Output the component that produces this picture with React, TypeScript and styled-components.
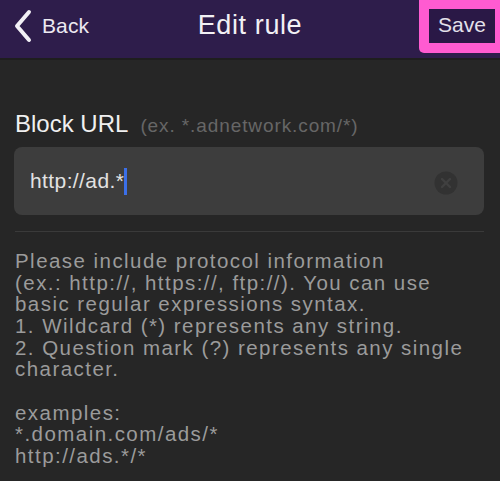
import React from "react";
import styled, { createGlobalStyle } from "styled-components";

const GlobalStyle = createGlobalStyle`
  html, body {
    margin: 0;
    padding: 0;
    background: #262626;
  }
  body {
    font-family: "Liberation Sans", Arial, sans-serif;
  }
`;

const Screen = styled.div`
  width: 500px;
  height: 481px;
  background: #262626;
  overflow: hidden;
`;

const NavBar = styled.header`
  position: relative;
  display: flex;
  align-items: stretch;
  justify-content: space-between;
  height: 58px;
  background: #2e1d4b;
  border-bottom: 2px solid #1e1e1e;
`;

const BackButton = styled.button`
  display: flex;
  align-items: center;
  gap: 9px;
  padding: 0 0 6px 13px;
  border: none;
  background: none;
  color: #ece9f1;
  font-family: "Liberation Sans", Arial, sans-serif;
  font-size: 21px;
  letter-spacing: 0.1px;
  cursor: pointer;
`;

const Title = styled.h1`
  position: absolute;
  left: 0;
  right: 0;
  top: 0;
  margin: 0;
  line-height: 50px;
  text-align: center;
  font-weight: normal;
  font-size: 27px;
  letter-spacing: 0.6px;
  color: #f2f0f5;
  pointer-events: none;
`;

const SaveHighlight = styled.div`
  display: flex;
  align-items: flex-start;
  height: 53px;
  padding: 9px 5px 0 10px;
  box-sizing: border-box;
  background: #ff5bd1;
  border-bottom-left-radius: 5px;
`;

const SaveButton = styled.button`
  width: 66px;
  height: 34px;
  border: none;
  background: #2a1846;
  color: #e4e0ea;
  font-family: "Liberation Sans", Arial, sans-serif;
  font-size: 21px;
  padding: 0 0 2px;
  text-align: center;
`;

const Content = styled.main`
  padding: 50px 15px 0;
`;

const LabelRow = styled.div`
  display: flex;
  align-items: baseline;
  gap: 12px;
`;

const Label = styled.span`
  font-size: 24px;
  color: #f0f0f0;
`;

const Hint = styled.span`
  font-size: 19px;
  letter-spacing: 0.9px;
  color: #666666;
`;

const InputBox = styled.div`
  display: flex;
  align-items: center;
  justify-content: space-between;
  height: 68px;
  margin: 9px 1px 0 -1px;
  padding: 0 26px 0 16px;
  border-radius: 8px;
  background: #3d3d3d;
`;

const InputText = styled.span`
  display: flex;
  align-items: center;
  font-size: 21px;
  letter-spacing: 0.4px;
  color: #e2e2e2;
`;

const Caret = styled.span`
  display: inline-block;
  width: 3px;
  height: 27px;
  background: #3b6fe8;
`;

const ClearIcon = styled.svg`
  width: 24px;
  height: 24px;
  margin-top: 3px;
`;

const Divider = styled.hr`
  margin: 16px 1px 0 0;
  border: none;
  border-top: 1px solid #3a3a3a;
`;

const HelpText = styled.p`
  margin: 18px 0 0;
  font-size: 20.5px;
  line-height: 21.67px;
  letter-spacing: 1.45px;
  color: #9b9b9b;
  white-space: pre-line;
`;

const help = `Please include protocol information
(ex.: http://, https://, ftp://). You can use
basic regular expressions syntax.
1. Wildcard (*) represents any string.
2. Question mark (?) represents any single
character.

examples:
*.domain.com/ads/*
http://ads.*/*`;

const App = () => {
  return (
    <Screen>
      <GlobalStyle />
      <NavBar>
        <BackButton>
          <svg width="20" height="34" viewBox="0 0 20 34">
            <path
              d="M16 3 L4 17 L16 31"
              fill="none"
              stroke="#f2f0f5"
              strokeWidth="4"
              strokeLinecap="round"
              strokeLinejoin="round"
            />
          </svg>
          Back
        </BackButton>
        <Title>Edit rule</Title>
        <SaveHighlight>
          <SaveButton>Save</SaveButton>
        </SaveHighlight>
      </NavBar>
      <Content>
        <LabelRow>
          <Label>Block URL</Label>
          <Hint>(ex. *.adnetwork.com/*)</Hint>
        </LabelRow>
        <InputBox>
          <InputText>
            http://ad.*
            <Caret />
          </InputText>
          <ClearIcon viewBox="0 0 24 24">
            <circle cx="12" cy="12" r="11.5" fill="#323232" />
            <path
              d="M8 8 L16 16 M16 8 L8 16"
              stroke="#404040"
              strokeWidth="2.4"
              strokeLinecap="round"
            />
          </ClearIcon>
        </InputBox>
        <Divider />
        <HelpText>{help}</HelpText>
      </Content>
    </Screen>
  );
};

export default App;
